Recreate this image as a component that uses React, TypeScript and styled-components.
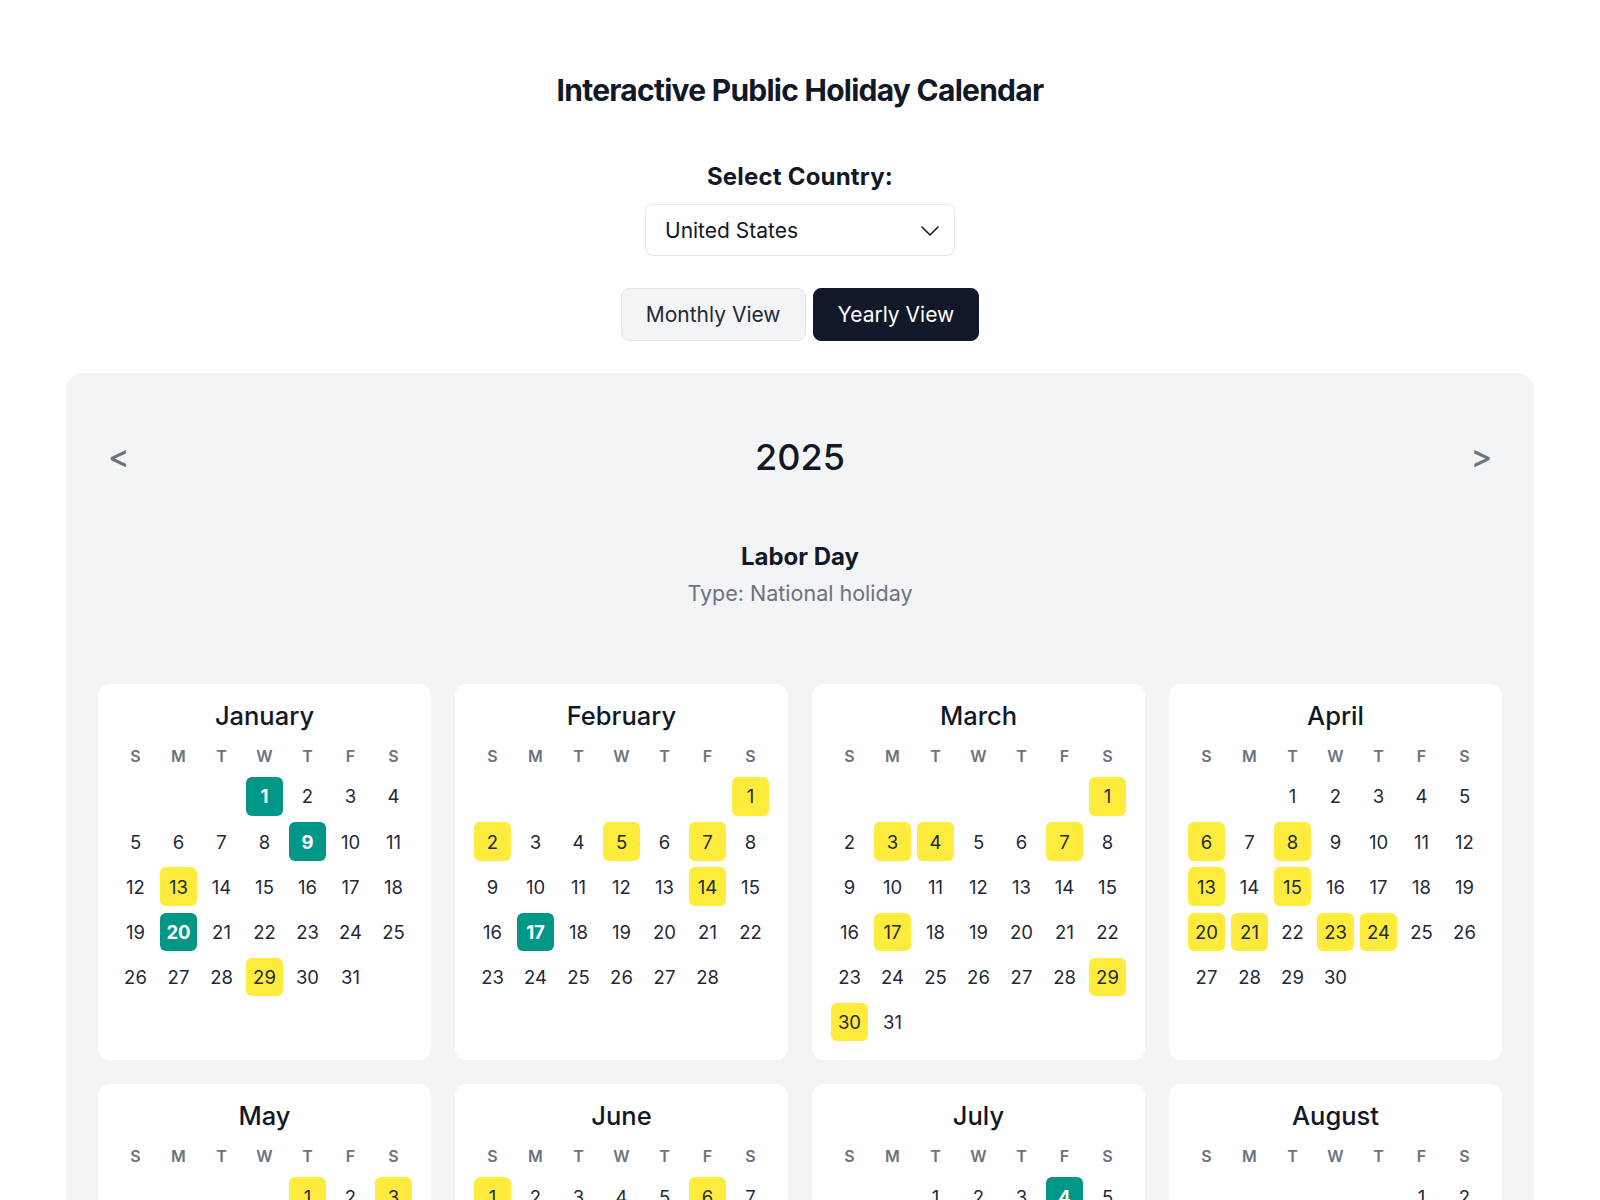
import React from 'react';
import styled, { createGlobalStyle } from 'styled-components';

const GlobalStyle = createGlobalStyle`
  * {
    box-sizing: border-box;
  }

  body {
    margin: 0;
    background: #ffffff;
    color: #111827;
    font-family: Inter, "Noto Sans", "Liberation Sans", sans-serif;
  }
`;

const Page = styled.div`
  display: flex;
  flex-direction: column;
  align-items: center;
  padding: 72px 66px 0;
`;

const Title = styled.h1`
  margin: 0;
  font-size: 30px;
  line-height: 36px;
  font-weight: 700;
  letter-spacing: -0.75px;
  color: #111827;
`;

const CountryLabel = styled.label`
  margin-top: 53px;
  font-size: 24px;
  line-height: 32px;
  font-weight: 700;
  letter-spacing: 0.2px;
  color: #111827;
`;

const SelectWrap = styled.div`
  position: relative;
  margin-top: 11px;
  width: 310px;
  height: 52px;
`;

const Select = styled.select`
  appearance: none;
  width: 100%;
  height: 100%;
  padding: 0 44px 0 19px;
  border: 1px solid #e5e7eb;
  border-radius: 8px;
  background: #ffffff;
  font-family: inherit;
  font-size: 21px;
  color: #111827;
  outline: none;
`;

const Chevron = styled.svg`
  position: absolute;
  right: 16px;
  top: 22px;
  pointer-events: none;
`;

const ViewToggle = styled.div`
  display: flex;
  gap: 7px;
  margin-top: 32px;
`;

const ToggleButton = styled.button<{ $active?: boolean }>`
  padding: 12px 24px;
  border: 1px solid ${({ $active }) => ($active ? '#111827' : '#e5e7eb')};
  border-radius: 8px;
  background: ${({ $active }) => ($active ? '#111827' : '#f3f4f6')};
  color: ${({ $active }) => ($active ? '#ffffff' : '#1f2937')};
  font-family: inherit;
  font-size: 21px;
  line-height: 27px;
  cursor: pointer;
`;

const Panel = styled.section`
  align-self: stretch;
  margin-top: 32px;
  padding: 32px;
  background: #f3f4f6;
  border-radius: 16px;
`;

const YearNav = styled.div`
  display: flex;
  align-items: center;
  justify-content: space-between;
  padding: 32px 10px;
`;

const NavButton = styled.button`
  padding: 0;
  border: none;
  background: none;
  font-family: inherit;
  font-size: 32px;
  line-height: 40px;
  font-weight: 500;
  color: #6b7280;
  cursor: pointer;
`;

const Year = styled.h2`
  margin: 0;
  font-size: 36px;
  line-height: 40px;
  font-weight: 500;
  color: #111827;
`;

const HolidayInfo = styled.div`
  margin: 32px 0 77px;
  text-align: center;
`;

const HolidayName = styled.h3`
  margin: 0;
  font-size: 24px;
  line-height: 32px;
  font-weight: 700;
  color: #111827;
`;

const HolidayType = styled.p`
  margin: 6px 0 0;
  font-size: 21.5px;
  line-height: 28px;
  color: #6b7280;
`;

const MonthsGrid = styled.div`
  display: grid;
  grid-template-columns: repeat(4, 1fr);
  gap: 24px;
`;

const MonthCard = styled.div`
  padding: 16px 16px 19px;
  background: #ffffff;
  border-radius: 12px;
`;

const MonthName = styled.h4`
  margin: 0 0 12px;
  text-align: center;
  font-size: 25.5px;
  line-height: 32px;
  font-weight: 500;
  color: #111827;
`;

const DaysGrid = styled.div`
  display: grid;
  grid-template-columns: repeat(7, 1fr);
  row-gap: 6.8px;
`;

const Weekday = styled.div`
  margin-bottom: 2.5px;
  text-align: center;
  font-size: 16px;
  line-height: 24px;
  font-weight: 600;
  color: #6b7280;
`;

type DayKind = 'plain' | 'national' | 'observance';

const DayCell = styled.div<{ $kind: DayKind }>`
  display: flex;
  align-items: center;
  justify-content: center;
  height: 38.3px;
  margin: 0 3.2px;
  border-radius: 6px;
  font-size: 18.5px;
  font-weight: ${({ $kind }) => ($kind === 'national' ? 700 : 400)};
  color: ${({ $kind }) => ($kind === 'national' ? '#ffffff' : '#1f2937')};
  background: ${({ $kind }) =>
    $kind === 'national' ? '#009688' : $kind === 'observance' ? '#ffeb3b' : 'transparent'};
`;

const MONTHS = [
  'January', 'February', 'March', 'April', 'May', 'June',
  'July', 'August', 'September', 'October', 'November', 'December',
];

const WEEKDAYS = ['S', 'M', 'T', 'W', 'T', 'F', 'S'];

const NATIONAL = [
  '1-1', '1-9', '1-20', '2-17', '5-26', '6-19', '7-4',
  '9-1', '10-13', '11-11', '11-27', '12-25',
];

const OBSERVANCES = [
  '1-13', '1-29', '2-1', '2-2', '2-5', '2-7', '2-14',
  '3-1', '3-3', '3-4', '3-7', '3-17', '3-29', '3-30',
  '4-6', '4-8', '4-13', '4-15', '4-20', '4-21', '4-23', '4-24',
  '5-1', '5-3', '5-5', '5-11', '6-1', '6-6', '6-14', '6-15',
  '8-26', '9-7', '10-31', '11-2', '12-24', '12-31',
];

const YEAR = 2025;

const kindOf = (month: number, day: number): DayKind => {
  const key = `${month + 1}-${day}`;
  if (NATIONAL.includes(key)) return 'national';
  if (OBSERVANCES.includes(key)) return 'observance';
  return 'plain';
};

const Month: React.FC<{ month: number }> = ({ month }) => {
  const offset = new Date(YEAR, month, 1).getDay();
  const days = new Date(YEAR, month + 1, 0).getDate();

  return (
    <MonthCard>
      <MonthName>{MONTHS[month]}</MonthName>
      <DaysGrid>
        {WEEKDAYS.map((w, i) => (
          <Weekday key={`w${i}`}>{w}</Weekday>
        ))}
        {Array.from({ length: offset }, (_, i) => (
          <div key={`e${i}`} />
        ))}
        {Array.from({ length: days }, (_, i) => (
          <DayCell key={i} $kind={kindOf(month, i + 1)}>
            {i + 1}
          </DayCell>
        ))}
      </DaysGrid>
    </MonthCard>
  );
};

export default function App() {
  return (
    <>
      <GlobalStyle />
      <Page>
        <Title>Interactive Public Holiday Calendar</Title>
        <CountryLabel htmlFor="country">Select Country:</CountryLabel>
        <SelectWrap>
          <Select id="country" defaultValue="US">
            <option value="US">United States</option>
            <option value="GB">United Kingdom</option>
            <option value="CA">Canada</option>
          </Select>
          <Chevron width="18" height="10" viewBox="0 0 18 10" fill="none">
            <polyline points="1,1 9,9 17,1" stroke="#111827" strokeWidth="1.6" strokeLinecap="round" strokeLinejoin="round" />
          </Chevron>
        </SelectWrap>
        <ViewToggle>
          <ToggleButton>Monthly View</ToggleButton>
          <ToggleButton $active>Yearly View</ToggleButton>
        </ViewToggle>

        <Panel>
          <YearNav>
            <NavButton>&lt;</NavButton>
            <Year>{YEAR}</Year>
            <NavButton>&gt;</NavButton>
          </YearNav>
          <HolidayInfo>
            <HolidayName>Labor Day</HolidayName>
            <HolidayType>Type: National holiday</HolidayType>
          </HolidayInfo>
          <MonthsGrid>
            {MONTHS.map((_, m) => (
              <Month key={m} month={m} />
            ))}
          </MonthsGrid>
        </Panel>
      </Page>
    </>
  );
}
